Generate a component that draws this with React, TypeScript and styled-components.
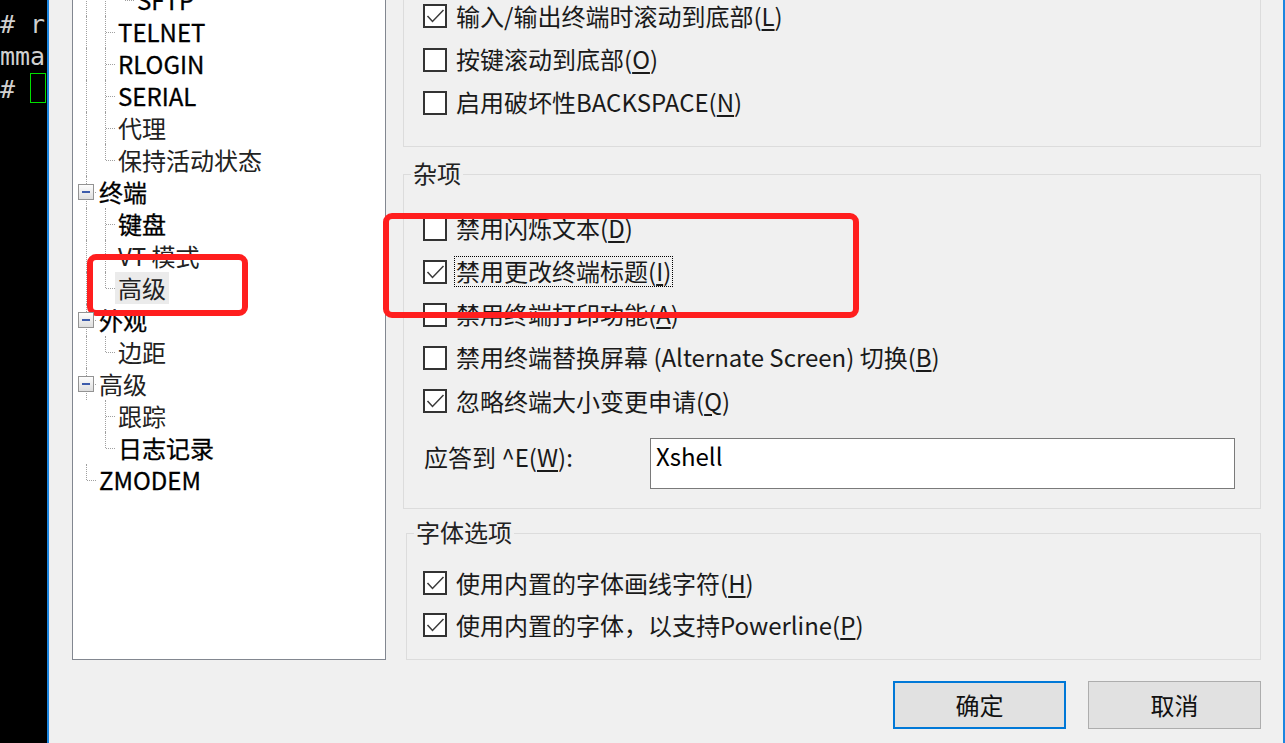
import styled, { createGlobalStyle } from "styled-components";

const GlobalStyle = createGlobalStyle`
  html, body {
    margin: 0;
    padding: 0;
    background: #f0f0f0;
  }
  body {
    font-family: "Noto Sans CJK SC", "Liberation Sans", sans-serif;
    color: #1a1a1a;
  }
`;

const Page = styled.div`
  position: relative;
  display: flex;
  width: 1285px;
  height: 743px;
  overflow: hidden;
`;

const Terminal = styled.div`
  flex: none;
  width: 49px;
  box-sizing: border-box;
  padding-top: 9px;
  background: #000;
  border-right: 2px solid #1c86e0;
  overflow: hidden;
  color: #d0d0d0;
  font-family: "DejaVu Sans Mono", "Liberation Mono", monospace;
  font-size: 25px;
  line-height: 32px;
  white-space: pre;
`;

const Cursor = styled.span`
  display: inline-block;
  width: 16px;
  height: 30px;
  box-sizing: border-box;
  border: 1px solid #00e000;
  vertical-align: -5px;
`;

const Dialog = styled.div`
  flex: 1;
  display: flex;
  flex-direction: column;
  background: #f0f0f0;
  border-right: 2px solid #1c86e0;
`;

const Body = styled.div`
  display: grid;
  grid-template-columns: 314px 1fr;
  column-gap: 17px;
  margin-top: -40px;
  padding: 0 22px 0 23px;
`;

const TreePanel = styled.div`
  background: #fff;
  border: 1px solid #828790;
  padding: 23px 0 0 4px;
  overflow: hidden;
`;

const TreeRow = styled.div`
  display: flex;
  height: 32px;
`;

const Guide = styled.div<{ $line?: boolean }>`
  position: relative;
  flex: none;
  width: 19px;

  &::before {
    content: "";
    display: ${(p) => (p.$line ? "block" : "none")};
    position: absolute;
    left: 9px;
    top: 0;
    bottom: 0;
    border-left: 1px dotted #a0a0a0;
  }
`;

const Connector = styled.div<{ $last?: boolean }>`
  position: relative;
  flex: none;
  width: 19px;

  &::before {
    content: "";
    position: absolute;
    left: 9px;
    top: 0;
    bottom: ${(p) => (p.$last ? "50%" : "0")};
    border-left: 1px dotted #a0a0a0;
  }

  &::after {
    content: "";
    position: absolute;
    left: 10px;
    right: 0;
    top: 50%;
    border-top: 1px dotted #a0a0a0;
  }
`;

const Expander = styled.div`
  position: absolute;
  z-index: 1;
  left: 1px;
  top: 8px;
  width: 16px;
  height: 16px;
  box-sizing: border-box;
  border: 1px solid #939393;
  background: linear-gradient(#fdfdfd, #dedede);
  display: flex;
  align-items: center;
  justify-content: center;

  &::before {
    content: "";
    width: 8px;
    height: 2px;
    background: #3d5cab;
  }
`;

const NodeLabel = styled.span<{ $selected?: boolean; $strong?: boolean }>`
  padding: 0 3px;
  font-size: 24px;
  line-height: 32px;
  white-space: nowrap;
  color: ${(p) => (p.$strong ? "#000" : "#222")};
  background: ${(p) => (p.$selected ? "#ebebeb" : "transparent")};
  -webkit-text-stroke: ${(p) => (p.$strong ? "0.3px #000" : "0")};
`;

const RightColumn = styled.div`
  display: flex;
  flex-direction: column;
`;

const Group = styled.div<{ $top: number; $bottom: number; $gap: number; $indent?: number }>`
  position: relative;
  margin-top: ${(p) => p.$gap}px;
  margin-left: ${(p) => p.$indent ?? 0}px;
  border: 1px solid #dcdcdc;
  padding: ${(p) => p.$top}px 25px ${(p) => p.$bottom}px ${(p) => 19 - (p.$indent ?? 0)}px;
`;

const GroupTitle = styled.div`
  position: absolute;
  top: -14px;
  left: 7px;
  padding: 0 2px;
  background: #f0f0f0;
  font-size: 24px;
  line-height: 24px;
  color: #222;
`;

const CheckRow = styled.div<{ $h?: number }>`
  display: flex;
  align-items: center;
  gap: 7px;
  height: ${(p) => p.$h ?? 43}px;
`;

const Box = styled.span`
  flex: none;
  width: 24px;
  height: 24px;
  box-sizing: border-box;
  border: 2px solid #333;
  background: #fff;
  display: flex;
`;

const CheckLabel = styled.span<{ $focused?: boolean }>`
  padding: 0 1px 2px;
  border: 1px dotted ${(p) => (p.$focused ? "#000" : "transparent")};
  font-size: 24px;
  line-height: 27px;
  white-space: nowrap;
  color: #1a1a1a;

  u {
    text-underline-offset: 3px;
  }
`;

const ReplyRow = styled.div`
  display: flex;
  align-items: flex-start;
  margin-top: 15px;
`;

const ReplyLabel = styled.span`
  width: 226px;
  padding: 5px 0 0 1px;
  font-size: 24px;
  line-height: 28px;
  color: #1a1a1a;

  u {
    text-underline-offset: 3px;
  }
`;

const TextBox = styled.div`
  width: 585px;
  height: 51px;
  box-sizing: border-box;
  border: 1px solid #7a7a7a;
  background: #fff;
  padding: 3px 5px;
  font-size: 24px;
  line-height: 28px;
  color: #000;
`;

const ButtonBar = styled.div`
  grid-column: 2;
  display: flex;
  justify-content: flex-end;
  gap: 22px;
  margin-top: 21px;
`;

const Button = styled.button<{ $primary?: boolean }>`
  width: 173px;
  height: 48px;
  box-sizing: border-box;
  background: #e1e1e1;
  border: ${(p) => (p.$primary ? "2px solid #0078d7" : "1px solid #adadad")};
  font-family: inherit;
  font-size: 24px;
  color: #111;
  padding: 0 0 2px;
`;

const Mark = styled.div<{ $x: number; $y: number; $w: number; $h: number }>`
  position: absolute;
  left: ${(p) => p.$x}px;
  top: ${(p) => p.$y}px;
  width: ${(p) => p.$w}px;
  height: ${(p) => p.$h}px;
  box-sizing: border-box;
  border: 6px solid #ff1e1e;
  border-radius: 9px;
  pointer-events: none;
`;

type Node = {
  label: string;
  guides: boolean[];
  last?: boolean;
  expander?: boolean;
  selected?: boolean;
  strong?: boolean;
};

const tree: Node[] = [
  { label: "SFTP", guides: [true, true], last: true, strong: true },
  { label: "TELNET", guides: [true], strong: true },
  { label: "RLOGIN", guides: [true], strong: true },
  { label: "SERIAL", guides: [true], strong: true },
  { label: "代理", guides: [true] },
  { label: "保持活动状态", guides: [true], last: true },
  { label: "终端", guides: [], expander: true, strong: true },
  { label: "键盘", guides: [true], strong: true },
  { label: "VT 模式", guides: [true] },
  { label: "高级", guides: [true], last: true, selected: true },
  { label: "外观", guides: [], expander: true, strong: true },
  { label: "边距", guides: [true], last: true },
  { label: "高级", guides: [], expander: true },
  { label: "跟踪", guides: [false] },
  { label: "日志记录", guides: [false], last: true, strong: true },
  { label: "ZMODEM", guides: [], last: true, strong: true },
];

const CheckMark = () => (
  <svg width="20" height="20" viewBox="0 0 20 20">
    <polyline points="2.5,10 7.5,15.5 18.5,4" fill="none" stroke="#3a3a3a" strokeWidth="1.5" />
  </svg>
);

type CheckProps = { checked?: boolean; focused?: boolean; h?: number; children: React.ReactNode };

const Check = ({ checked, focused, h, children }: CheckProps) => (
  <CheckRow $h={h}>
    <Box>{checked && <CheckMark />}</Box>
    <CheckLabel $focused={focused}>{children}</CheckLabel>
  </CheckRow>
);

export default function App() {
  return (
    <>
      <GlobalStyle />
      <Page>
        <Terminal>
          <div># r</div>
          <div>mma</div>
          <div>
            # <Cursor />
          </div>
        </Terminal>

        <Dialog>
          <Body>
            <TreePanel>
              {tree.map((node, i) => (
                <TreeRow key={i}>
                  {node.guides.map((g, j) => (
                    <Guide key={j} $line={g} />
                  ))}
                  <Connector $last={node.last}>{node.expander && <Expander />}</Connector>
                  <NodeLabel $selected={node.selected} $strong={node.strong}>
                    {node.label}
                  </NodeLabel>
                </TreeRow>
              ))}
            </TreePanel>

            <RightColumn>
              <Group $gap={0} $top={33} $bottom={22}>
                <Check checked h={44}>
                  输入/输出终端时滚动到底部(<u>L</u>)
                </Check>
                <Check h={43}>
                  按键滚动到底部(<u>O</u>)
                </Check>
                <Check h={43}>
                  启用破坏性BACKSPACE(<u>N</u>)
                </Check>
              </Group>

              <Group $gap={27} $top={32} $bottom={19}>
                <GroupTitle>杂项</GroupTitle>
                <Check>
                  禁用闪烁文本(<u>D</u>)
                </Check>
                <Check checked focused>
                  禁用更改终端标题(<u>I</u>)
                </Check>
                <Check>
                  禁用终端打印功能(<u>A</u>)
                </Check>
                <Check>
                  禁用终端替换屏幕 (Alternate Screen) 切换(<u>B</u>)
                </Check>
                <Check checked h={44}>
                  忽略终端大小变更申请(<u>Q</u>)
                </Check>
                <ReplyRow>
                  <ReplyLabel>
                    应答到 ^E(<u>W</u>):
                  </ReplyLabel>
                  <TextBox>Xshell</TextBox>
                </ReplyRow>
              </Group>

              <Group $gap={24} $top={28} $bottom={13} $indent={3}>
                <GroupTitle>字体选项</GroupTitle>
                <Check checked h={42}>
                  使用内置的字体画线字符(<u>H</u>)
                </Check>
                <Check checked h={42}>
                  使用内置的字体，以支持Powerline(<u>P</u>)
                </Check>
              </Group>
            </RightColumn>

            <ButtonBar>
              <Button $primary>确定</Button>
              <Button>取消</Button>
            </ButtonBar>
          </Body>
        </Dialog>

        <Mark $x={87} $y={254} $w={161} $h={62} />
        <Mark $x={383} $y={213} $w={476} $h={105} />
      </Page>
    </>
  );
}
